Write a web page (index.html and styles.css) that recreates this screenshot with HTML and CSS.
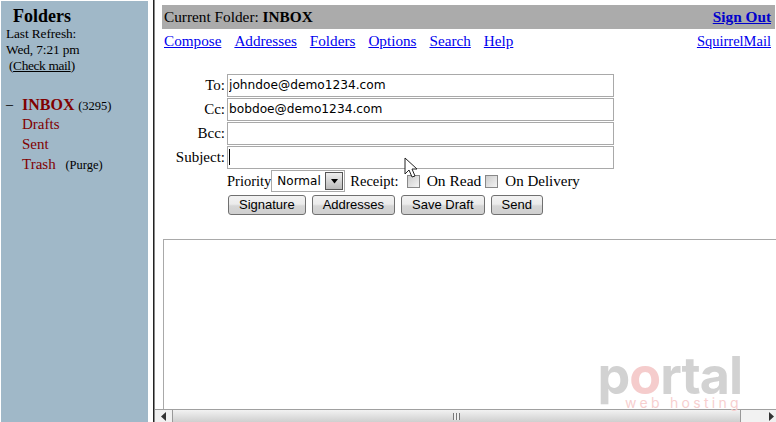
FILE: index.html
```html
<!DOCTYPE html>
<html lang="en">
<head>
<meta charset="utf-8">
<title>SquirrelMail - Compose</title>
<link rel="stylesheet" href="styles.css">
</head>
<body>
<div class="page">
  <aside class="sidebar">
    <h1 class="side-title">Folders</h1>
    <div class="refresh">Last Refresh:<br>Wed, 7:21 pm<br><span class="check">(<a href="#">Check mail</a>)</span></div>
    <ul class="folders">
      <li class="folder"><span class="dash">–</span><a class="inbox" href="#">INBOX</a> <span class="small">(3295)</span></li>
      <li class="folder"><a href="#">Drafts</a></li>
      <li class="folder"><a href="#">Sent</a></li>
      <li class="folder"><a href="#">Trash</a> <span class="small purge">(Purge)</span></li>
    </ul>
  </aside>
  <div class="divider"></div>
  <main class="main">
    <div class="content">
      <div class="status"><span>Current Folder: <b>INBOX</b></span><a class="signout" href="#">Sign Out</a></div>
      <nav class="nav">
        <div class="nav-links"><a href="#">Compose</a><a href="#">Addresses</a><a href="#">Folders</a><a href="#">Options</a><a href="#">Search</a><a href="#">Help</a></div>
        <a class="brand" href="#">SquirrelMail</a>
      </nav>
      <form class="form">
        <div class="row"><label class="lbl">To:</label><input class="field" type="text" value="johndoe@demo1234.com"></div>
        <div class="row"><label class="lbl">Cc:</label><input class="field" type="text" value="bobdoe@demo1234.com"></div>
        <div class="row"><label class="lbl">Bcc:</label><input class="field" type="text"></div>
        <div class="row"><label class="lbl">Subject:</label><div class="field caret-field"><span class="caret"></span></div></div>
        <div class="options">
          <span class="priority">Priority</span>
          <div class="select"><span>Normal</span><span class="drop"><svg width="9" height="5" viewBox="0 0 9 5"><path d="M1 0h7L4.500 4.500z" fill="#000"/></svg></span></div>
          <span class="receipt">Receipt:</span>
          <span class="check-box first"></span><span class="opt-label">On Read</span>
          <span class="check-box second"></span><span class="opt-label delivery">On Delivery</span>
        </div>
        <div class="buttons">
          <button class="btn" type="button">Signature</button>
          <button class="btn" type="button">Addresses</button>
          <button class="btn" type="button">Save Draft</button>
          <button class="btn" type="button">Send</button>
        </div>
        <div class="body-box"></div>
      </form>
    </div>
    <div class="scrollbar">
      <span class="arrow"><svg width="6" height="9" viewBox="0 0 6 9"><path d="M5 0v9L0 4.500z" fill="#333"/></svg></span>
      <div class="thumb"><span class="grip"></span></div>
      <span class="track"></span>
      <span class="arrow arrow-end"><svg width="6" height="9" viewBox="0 0 6 9"><path d="M0 0v9l5-4.500z" fill="#333"/></svg></span>
    </div>
  </main>
</div>
<svg class="pointer" width="14" height="22" viewBox="0 0 14 22"><path d="M1 1v16l4-4 3 7 3-1-3-7h5z" fill="#fff" stroke="#222" stroke-width="1"/></svg>
<div class="watermark"><div class="wm-main">p<span class="wm-o">o</span>rtal</div><div class="wm-sub">web hosting</div></div>
</body>
</html>
```
FILE: styles.css
```css
html, body {
  margin: 0;
  padding: 0;
  width: 776px;
  height: 422px;
  overflow: hidden;
  background: #fff;
  font-family: "Liberation Serif", "Times New Roman", serif;
  font-size: 16px;
  color: #000;
}
.page {
  display: flex;
  height: 422px;
  position: relative;
}
a { color: #0000ee; }
.sidebar {
  width: 147px;
  margin: 1px 0 0 1px;
  background: #a0b8c8;
  flex: none;
  box-sizing: border-box;
  padding: 5px 0 0 5px;
}
.side-title {
  margin: 0 0 0 7px;
  font-size: 18px;
  line-height: 20px;
  font-weight: bold;
}
.refresh {
  font-size: 13.330px;
  line-height: 16px;
  letter-spacing: -0.100px;
}
.check { padding-left: 3px; letter-spacing: -0.350px; }
.check a { color: #000; }
.folders {
  list-style: none;
  margin: 21px 0 0;
  padding: 0;
}
.folder {
  height: 20px;
  line-height: 18px;
  padding-left: 16px;
  position: relative;
  font-size: 15px;
  white-space: nowrap;
}
.folder:first-child { line-height: 20px; }
.folder a { color: #800000; text-decoration: none; }
.folder .inbox { font-size: 16px; font-weight: bold; }
.dash { position: absolute; left: 0; font-size: 14px; }
.small { font-size: 12.500px; }
.purge { margin-left: 6px; }
.divider {
  width: 2px;
  margin-left: 5px;
  background: #222;
  flex: none;
  box-sizing: border-box;
  border-right: 1px solid #888;
}
.main {
  flex: 1;
  min-width: 0;
  display: flex;
  flex-direction: column;
}
.content {
  flex: 1;
  min-height: 0;
  overflow: hidden;
  padding: 5px 0 0 7px;
}
.status {
  display: flex;
  justify-content: space-between;
  align-items: center;
  width: 613px;
  height: 24px;
  background: #ababab;
  box-sizing: border-box;
  padding: 0 4px 0 2px;
  font-size: 15.300px;
}
.signout { font-weight: bold; font-size: 15.300px; color: #0000cc; }
.nav {
  display: flex;
  justify-content: space-between;
  width: 613px;
  box-sizing: border-box;
  padding: 3px 4px 0 2px;
  font-size: 15.200px;
  line-height: 18px;
}
.nav-links { display: flex; gap: 13px; }
.brand { font-size: 14.500px; }
.form { margin-top: 23px; }
.row {
  display: flex;
  align-items: center;
  height: 24px;
}
.lbl {
  width: 63px;
  margin-right: 2px;
  text-align: right;
  font-size: 15px;
  flex: none;
}
.field {
  width: 387px;
  height: 23px;
  box-sizing: border-box;
  border: 1px solid #a9a9a9;
  padding: 0 1px;
  margin: 0;
  font-family: "DejaVu Sans", sans-serif;
  font-size: 12.200px;
  color: #000;
  background: #fff;
  outline: none;
}
.caret-field { display: flex; align-items: center; padding-left: 1px; }
.caret { width: 1px; height: 16px; background: #000; }
.options {
  display: flex;
  align-items: center;
  margin-left: 65px;
  height: 24px;
  font-size: 15.500px;
  white-space: nowrap;
}
.priority { font-size: 14.500px; }
.select {
  display: flex;
  align-items: center;
  justify-content: space-between;
  width: 74px;
  height: 22px;
  box-sizing: border-box;
  border: 1px solid #a9a9a9;
  padding: 0 1px 0 5px;
  font-family: "DejaVu Sans", sans-serif;
  font-size: 12px;
}
.drop {
  display: flex;
  align-items: center;
  justify-content: center;
  width: 16px;
  height: 16px;
  border: 1px solid #555;
  background: linear-gradient(#eee, #bbb);
}
.receipt { margin-left: 5px; font-size: 14.500px; }
.check-box {
  width: 11px;
  height: 11px;
  border: 1px solid #888;
  background: linear-gradient(135deg, #ccc, #f4f4f4);
  flex: none;
}
.check-box.first { margin-left: 8px; }
.check-box.second { margin-left: 4px; }
.opt-label { margin-left: 7px; }
.delivery { font-size: 15px; }
.buttons {
  display: flex;
  gap: 6px;
  margin: 2px 0 0 66px;
}
.btn {
  height: 20px;
  box-sizing: border-box;
  padding: 0 10px;
  border: 1px solid #707070;
  border-radius: 3px;
  background: linear-gradient(#f2f2f2 0%, #ebebeb 45%, #d6d6d6 55%, #cfcfcf 100%);
  font-family: "Liberation Sans", Arial, sans-serif;
  font-size: 13px;
  line-height: 18px;
  color: #000;
}
.body-box {
  margin: 24px 0 0 1px;
  height: 200px;
  width: 640px;
  border: 1px solid #a9a9a9;
}
.scrollbar {
  flex: none;
  height: 13px;
  display: flex;
  align-items: stretch;
  background: #f2f2f2;
  border-top: 1px solid #a0a0a0;
  box-sizing: border-box;
}
.arrow {
  width: 17px;
  flex: none;
  display: flex;
  align-items: center;
  justify-content: center;
  background: #f0f0f0;
}
.arrow-end { width: 16px; justify-content: flex-end; padding-right: 1px; box-sizing: border-box; }
.thumb {
  width: 569px;
  flex: none;
  box-sizing: border-box;
  display: flex;
  align-items: center;
  justify-content: center;
  border: 1px solid #999;
  border-width: 0 1px 0 1px;
  background: linear-gradient(#f2f2f2, #cfcfcf);
}
.track { flex: 1; }
.grip {
  width: 7px;
  height: 7px;
  background: repeating-linear-gradient(90deg, #777 0 1px, #eee 1px 3px);
}
.pointer {
  position: absolute;
  left: 404px;
  top: 157px;
}
.watermark {
  position: absolute;
  left: 596px;
  top: 355px;
  width: 146px;
  text-align: right;
  font-family: "Inter", "Liberation Sans", sans-serif;
  pointer-events: none;
}
.wm-main {
  font-size: 52px;
  line-height: 42px;
  font-weight: 700;
  letter-spacing: -1px;
  color: #d2d2d2;
}
.wm-o { color: #f5cccc; }
.wm-sub {
  font-size: 14px;
  line-height: 12px;
  letter-spacing: 3.300px;
  color: #f7cfcf;
}
```
